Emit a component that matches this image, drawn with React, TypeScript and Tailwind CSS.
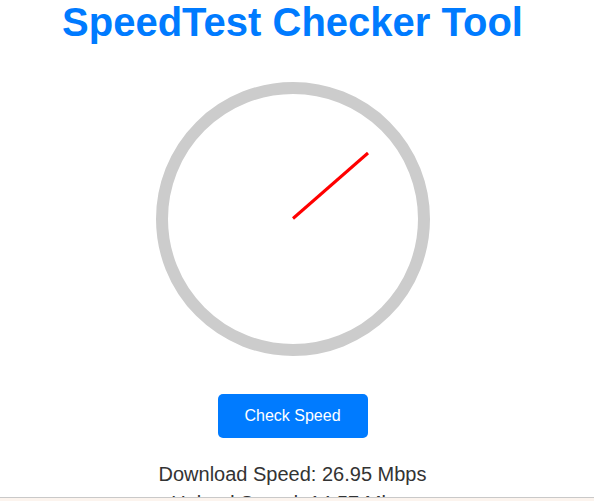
export default function App() {
  const font = { fontFamily: '"Liberation Sans", Arial, sans-serif' };
  return (
    <div
      className="relative h-[501px] w-[594px] overflow-hidden bg-white font-['Liberation_Sans',Arial,sans-serif]"
      style={font}
    >
      <div className="flex w-[585px] flex-col items-center">
        <h1 className="mt-[2px] text-[40px] font-bold leading-[40px] text-[#007bff]">
          SpeedTest Checker Tool
        </h1>

        <div className="relative mt-[40px] h-[274px] w-[274px] rounded-full border-[12px] border-[#cccccc]">
          <svg
            className="absolute -left-[12px] -top-[12px]"
            width="274"
            height="274"
            viewBox="0 0 274 274"
          >
            <line x1="137" y1="136.5" x2="212" y2="71" stroke="#ff0000" strokeWidth="3" />
          </svg>
        </div>

        <button className="mt-[38px] h-[44px] w-[150px] rounded-[5px] bg-[#007bff] text-[16px] text-white">
          Check Speed
        </button>

        <div className="mt-[22px] text-center text-[20px] leading-[29px] text-[#333333]">
          <p>Download Speed: 26.95 Mbps</p>
          <p>Upload Speed: 14.57 Mbps</p>
        </div>
      </div>

      <div className="fixed bottom-0 left-0 h-[4px] w-full border-t border-[#c9c9c9] bg-[#fcf4ee]" />
    </div>
  );
}
